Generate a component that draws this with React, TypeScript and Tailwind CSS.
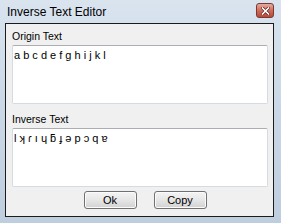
import React from 'react';

function CloseButton() {
  return (
    <div className="flex h-[15px] w-[18px] items-center justify-center rounded-[3px] border border-[#7a3a32] bg-gradient-to-b from-[#e4ab9f] via-[#cf6c5d] to-[#b8483a]">
      <svg width="9" height="8" viewBox="0 0 9 8">
        <path d="M1.5 1 L7.5 7 M7.5 1 L1.5 7" stroke="#5a2520" strokeWidth="3" strokeLinecap="square" />
        <path d="M1.5 1 L7.5 7 M7.5 1 L1.5 7" stroke="#ffffff" strokeWidth="1.6" strokeLinecap="square" />
      </svg>
    </div>
  );
}

function TextBox({ value }: { value: string }) {
  return (
    <div className="h-[59px] rounded-[2px] border border-[#d5dbe3] border-t-[#abadb3] bg-white px-[1px] pt-[3px] text-[11px] leading-[13px] text-black">
      {value}
    </div>
  );
}

function Button({ label }: { label: string }) {
  return (
    <div className="flex h-[18px] w-[53px] items-center justify-center rounded-[3px] border border-[#707070] bg-gradient-to-b from-[#f4f4f4] via-[#e6e6e6] to-[#d2d2d2] text-[11px] leading-none text-black shadow-[inset_0_0_0_1px_#fbfbfb]">
      {label}
    </div>
  );
}

export default function App() {
  return (
    <div
      className="flex h-[223px] w-[281px] flex-col bg-gradient-to-b from-[#d9e4ef] via-[#c9d7e6] to-[#bfcedf]"
      style={{ fontFamily: '"Liberation Sans", Arial, sans-serif' }}
    >
      <div className="flex h-[23px] items-center justify-between pl-[7px] pr-[7px]">
        <span className="text-[12px] leading-none text-black">Inverse Text Editor</span>
        <div className="-mt-[2px]">
          <CloseButton />
        </div>
      </div>
      <div className="mb-[6px] ml-[5px] mr-[7px] flex flex-1 flex-col border border-[#1c1c1c] bg-[#f0f0f0] pl-[6px] pr-[5px] pt-[6px]">
        <div className="h-[13px] text-[10.5px] leading-[13px] text-black">Origin Text</div>
        <div className="mt-[2px]">
          <TextBox value="a b c d e f g h i j k l" />
        </div>
        <div className="mt-[9px] h-[13px] text-[10.5px] leading-[13px] text-black">Inverse Text</div>
        <div className="mt-[2px]">
          <TextBox value="l ʞ ɾ ı ɥ ƃ ɟ ǝ p ɔ q ɐ" />
        </div>
        <div className="mt-[4px] flex justify-center gap-[17px] pl-[10px]">
          <Button label="Ok" />
          <Button label="Copy" />
        </div>
      </div>
    </div>
  );
}
